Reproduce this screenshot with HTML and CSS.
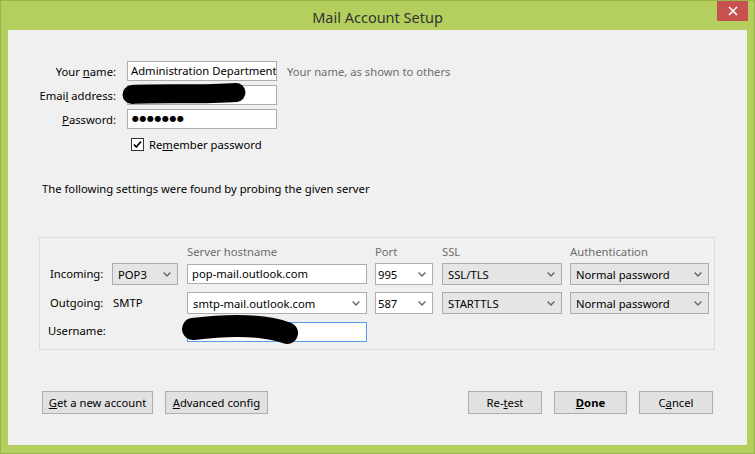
FILE: index.html
```html
<!DOCTYPE html>
<html>
<head>
<meta charset="utf-8">
<title>Mail Account Setup</title>
<link rel="stylesheet" href="styles.css">
</head>
<body>
<div class="window">
  <div class="titlebar">
    <span class="title">Mail Account Setup</span>
    <div class="close"><svg width="10" height="10" viewBox="0 0 10 10"><path d="M1 1 L9 9 M9 1 L1 9" stroke="#fff" stroke-width="1.6" fill="none"/></svg></div>
  </div>
  <div class="client">
    <div class="account">
      <span class="lbl">Your <u>n</u>ame:</span>
      <div class="input">Administration Department</div>
      <span class="hint">Your name, as shown to others</span>
      <span class="lbl">Emai<u>l</u> address:</span>
      <div class="input"></div>
      <span></span>
      <span class="lbl"><u>P</u>assword:</span>
      <div class="input dots">●●●●●●●</div>
      <span></span>
      <span></span>
      <div class="remember">
        <svg class="check" width="13" height="13" viewBox="0 0 13 13"><rect x="0.5" y="0.5" width="12" height="12" fill="#fff" stroke="#333"/><path d="M3 6.5 L5.3 9 L10 3.5" stroke="#000" stroke-width="1.8" fill="none"/></svg>
        <span>Re<u>m</u>ember password</span>
      </div>
    </div>
    <p class="found">The following settings were found by probing the given server</p>
    <div class="group">
      <span></span>
      <span></span>
      <span class="head">Server hostname</span>
      <span class="head">Port</span>
      <span class="head">SSL</span>
      <span class="head">Authentication</span>

      <span class="rlbl">Incoming:</span>
      <div class="select proto"><span>POP3</span><svg width="8" height="5" viewBox="0 0 8 5"><path d="M0.6 0.6 L4 4 L7.4 0.6" stroke="#666" stroke-width="1.4" fill="none"/></svg></div>
      <div class="input host">pop-mail.outlook.com</div>
      <div class="select combo port"><span>995</span><svg width="8" height="5" viewBox="0 0 8 5"><path d="M0.6 0.6 L4 4 L7.4 0.6" stroke="#666" stroke-width="1.4" fill="none"/></svg></div>
      <div class="select ssl"><span>SSL/TLS</span><svg width="8" height="5" viewBox="0 0 8 5"><path d="M0.6 0.6 L4 4 L7.4 0.6" stroke="#666" stroke-width="1.4" fill="none"/></svg></div>
      <div class="select auth"><span>Normal password</span><svg width="8" height="5" viewBox="0 0 8 5"><path d="M0.6 0.6 L4 4 L7.4 0.6" stroke="#666" stroke-width="1.4" fill="none"/></svg></div>

      <span class="rlbl">Outgoing:</span>
      <span class="smtp">SMTP</span>
      <div class="select combo host"><span>smtp-mail.outlook.com</span><svg width="8" height="5" viewBox="0 0 8 5"><path d="M0.6 0.6 L4 4 L7.4 0.6" stroke="#666" stroke-width="1.4" fill="none"/></svg></div>
      <div class="select combo port"><span>587</span><svg width="8" height="5" viewBox="0 0 8 5"><path d="M0.6 0.6 L4 4 L7.4 0.6" stroke="#666" stroke-width="1.4" fill="none"/></svg></div>
      <div class="select ssl"><span>STARTTLS</span><svg width="8" height="5" viewBox="0 0 8 5"><path d="M0.6 0.6 L4 4 L7.4 0.6" stroke="#666" stroke-width="1.4" fill="none"/></svg></div>
      <div class="select auth"><span>Normal password</span><svg width="8" height="5" viewBox="0 0 8 5"><path d="M0.6 0.6 L4 4 L7.4 0.6" stroke="#666" stroke-width="1.4" fill="none"/></svg></div>

      <span class="rlbl user">Username:</span>
      <span></span>
      <div class="input host focus"></div>
    </div>
    <div class="buttons">
      <div class="btns">
        <button class="btn b-new"><u>G</u>et a new account</button>
        <button class="btn b-adv"><u>A</u>dvanced config</button>
      </div>
      <div class="btns">
        <button class="btn b-re">Re-<u>t</u>est</button>
        <button class="btn b-done"><u>D</u>one</button>
        <button class="btn b-cancel">C<u>a</u>ncel</button>
      </div>
    </div>
  </div>
  <svg class="redact" width="755" height="454" viewBox="0 0 755 454">
    <path d="M132 94.5 C 160 93, 205 95, 236 92.5" stroke="#000" stroke-width="19" stroke-linecap="round" fill="none"/>
    <path d="M193 329 C 225 325, 262 324, 287 333" stroke="#000" stroke-width="22" stroke-linecap="round" fill="none"/>
  </svg>
</div>
</body>
</html>
```

FILE: styles.css
```css
* { box-sizing: border-box; }
html, body { margin: 0; padding: 0; }
body {
  width: 755px;
  height: 454px;
  overflow: hidden;
  font-family: "Noto Sans", "Open Sans", sans-serif;
  font-size: 11.25px;
  color: #000;
}
u { text-decoration: underline; text-underline-offset: 1px; }

.window {
  position: relative;
  width: 755px;
  height: 454px;
  background: #b5cf5f;
  border: 1px solid #9ab64b;
  display: flex;
  flex-direction: column;
}
.titlebar {
  position: relative;
  height: 29px;
  display: flex;
  align-items: center;
  justify-content: center;
}
.title {
  font-size: 14.5px;
  color: #333;
  margin-top: 2px;
}
.close {
  position: absolute;
  right: 6px;
  top: 0;
  width: 31px;
  height: 20px;
  background: #c75050;
  display: flex;
  align-items: center;
  justify-content: center;
}
.client {
  margin: 0 7px 8px 7px;
  height: 415px;
  background: #f0f0f0;
  display: flex;
  flex-direction: column;
}

.account {
  margin-top: 31px;
  display: grid;
  grid-template-columns: 108px 150px auto;
  grid-auto-rows: 20px;
  column-gap: 11px;
  row-gap: 4px;
  align-items: center;
}
.lbl { text-align: right; white-space: nowrap; }
.hint { color: #6d6d6d; margin-left: -1px; white-space: nowrap; }
.input {
  height: 20px;
  background: #fff;
  border: 1px solid #abadb3;
  padding: 0 3px;
  line-height: 18px;
  white-space: nowrap;
  overflow: hidden;
}
.dots {
  font-family: "DejaVu Sans", sans-serif;
  font-size: 8px;
  letter-spacing: 0.5px;
  line-height: 18px;
  padding-left: 4px;
}
.remember {
  grid-column: 2 / span 2;
  display: flex;
  align-items: center;
  gap: 5px;
  margin-left: 4px;
  margin-top: 2px;
  white-space: nowrap;
}
.check { display: block; }

.found {
  margin: 28px 0 0 34px;
  line-height: 16px;
}

.group {
  margin: 40px 0 0 31px;
  width: 676px;
  border: 1px solid #dcdcdc;
  padding: 1px 0 8px 10px;
  display: grid;
  grid-template-columns: 62px 75px 188px 67px 128px 139px;
  grid-template-rows: 24px 29px 29px 20px;
  align-items: start;
}
.head {
  color: #6d6d6d;
  align-self: center;
  white-space: nowrap;
  margin-top: 1px;
}
.rlbl { align-self: start; line-height: 22px; white-space: nowrap; }
.rlbl.user { line-height: 20px; margin-left: -2px; }
.smtp { line-height: 22px; margin-left: 1px; }

.select {
  height: 22px;
  background: #e5e5e5;
  border: 1px solid #acacac;
  display: flex;
  align-items: center;
  justify-content: space-between;
  padding: 0 6px 0 5px;
  white-space: nowrap;
}
.select svg { flex: none; display: block; }
.select.combo { background: #fff; border-color: #abadb3; }
.select.port { padding-left: 2px; }
.proto { width: 66px; }
.host { width: 180px; }
.port { width: 58px; }
.ssl { width: 120px; }
.auth { width: 139px; }
.group .input.host { margin-top: 1px; padding-left: 4px; }
.group .focus { border-color: #569de5; }

.buttons {
  margin: 41px 34px 0 34px;
  display: flex;
  justify-content: space-between;
}
.btns { display: flex; gap: 12px; }
.btn {
  height: 23px;
  margin: 0;
  padding: 0;
  font: inherit;
  color: #000;
  background: #e1e1e1;
  border: 1px solid #adadad;
  border-radius: 0;
}
.b-new { width: 111px; }
.b-adv { width: 103px; }
.b-re { width: 74px; }
.b-done { width: 73px; font-weight: bold; }
.b-cancel { width: 74px; }

.redact {
  position: absolute;
  left: -1px;
  top: -1px;
  pointer-events: none;
}
```
